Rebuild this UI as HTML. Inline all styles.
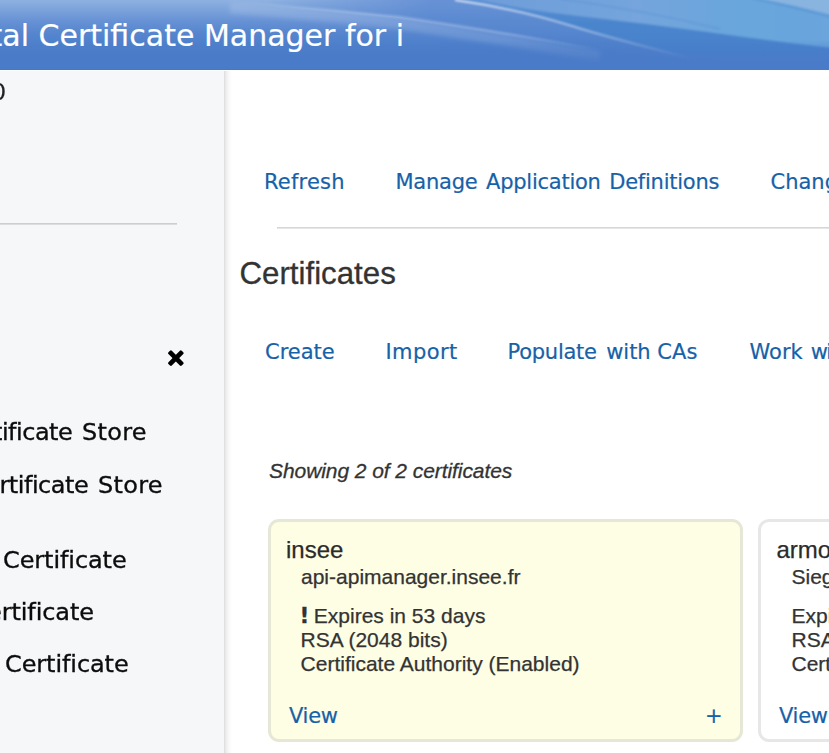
<!DOCTYPE html>
<html lang="en">
<head>
<meta charset="utf-8">
<title>Digital Certificate Manager for i</title>
<style>
html,body{margin:0;padding:0;}
body{width:829px;height:753px;overflow:hidden;position:relative;background:#fff;
  font-family:"DejaVu Sans","Liberation Sans",sans-serif;color:#161616;}
.abs{position:absolute;white-space:nowrap;line-height:1;}
#hdr{position:absolute;left:0;top:0;width:829px;height:70px;overflow:hidden;
  background:linear-gradient(to bottom,#8eb1e1 0px,#7ba2db 10px,#6590d4 22px,#5585ce 34px,#4c7eca 46px,#4a7bc8 56px,#4a7bc8 69px,#4473bd 70px);}
#hdr svg{position:absolute;left:0;top:0;}
#title{left:-9.5px;top:21px;font-size:30px;color:#fff;-webkit-text-stroke:0.2px #fff;}
#side{position:absolute;left:0;top:70px;width:224px;height:683px;background:linear-gradient(to bottom,#fcfdfe 0,#fcfdfe 1px,#f5f7f9 1.5px,#f5f7f9 100%);}
#sideshadow{position:absolute;left:224px;top:71px;width:8px;height:683px;
  background:linear-gradient(to right,rgba(0,0,0,0.14) 0,rgba(0,0,0,0.07) 2px,rgba(0,0,0,0.025) 5px,rgba(0,0,0,0) 8px);}
.item{font-size:24px;color:#0c0c0c;transform:scaleY(0.94);transform-origin:0 20px;-webkit-text-stroke:0.35px #0c0c0c;}
#sideline{position:absolute;left:0;top:223px;width:177px;height:2px;background:linear-gradient(to bottom,#cdcecf 0,#cdcecf 1px,#dcddde 1px,#dcddde 2px);}
.lnk{font-size:21px;color:#1761a8;-webkit-text-stroke:0.2px #1761a8;}
#hr{position:absolute;left:277px;top:227px;width:552px;height:2px;background:linear-gradient(to bottom,#d6d6d6 0,#d6d6d6 1px,#e6e6e6 1px,#e6e6e6 2px);}
.arial{font-family:"Liberation Sans",sans-serif;-webkit-text-stroke:0.3px currentColor;}
#h1{left:239.5px;top:258px;font-size:31.25px;color:#333;}
#showing{left:269px;letter-spacing:-0.07px;top:460px;font-size:21px;font-style:italic;color:#333;}
.card{position:absolute;box-sizing:border-box;border:3px solid #e6e7d6;border-radius:11px;background:#fefee5;}
.t{font-family:"Liberation Sans",sans-serif;color:#333;font-size:21px;-webkit-text-stroke:0.25px currentColor;}
.ct{font-family:"Liberation Sans",sans-serif;color:#2b2b2b;font-size:24px;-webkit-text-stroke:0.25px currentColor;}
</style>
</head>
<body>
<div id="hdr">
  <svg width="829" height="70" viewBox="0 0 829 70">
    <defs>
      <linearGradient id="gL" x1="480" y1="0" x2="829" y2="0" gradientUnits="userSpaceOnUse">
        <stop offset="0" stop-color="#6f9dd9"/>
        <stop offset="0.45" stop-color="#74a5dc"/>
        <stop offset="0.8" stop-color="#67a6dc"/>
        <stop offset="1" stop-color="#6aa5dc"/>
      </linearGradient>
      <linearGradient id="gD" x1="0" y1="0" x2="0" y2="70" gradientUnits="userSpaceOnUse">
        <stop offset="0" stop-color="#5a8fd3"/>
        <stop offset="0.35" stop-color="#4a85cd"/>
        <stop offset="0.7" stop-color="#4781cb"/>
        <stop offset="1" stop-color="#4a7bc8"/>
      </linearGradient>
      <linearGradient id="gS1" x1="455" y1="0" x2="690" y2="0" gradientUnits="userSpaceOnUse">
        <stop offset="0" stop-color="#fff" stop-opacity="0.75"/>
        <stop offset="0.5" stop-color="#fff" stop-opacity="0.45"/>
        <stop offset="1" stop-color="#fff" stop-opacity="0"/>
      </linearGradient>
      <linearGradient id="gS2" x1="230" y1="0" x2="600" y2="0" gradientUnits="userSpaceOnUse">
        <stop offset="0" stop-color="#fff" stop-opacity="0"/>
        <stop offset="0.3" stop-color="#fff" stop-opacity="0.25"/>
        <stop offset="0.75" stop-color="#fff" stop-opacity="0.3"/>
        <stop offset="1" stop-color="#fff" stop-opacity="0"/>
      </linearGradient>
      <linearGradient id="gFade" x1="0" y1="40" x2="0" y2="66" gradientUnits="userSpaceOnUse">
        <stop offset="0" stop-color="#4a7bc8" stop-opacity="0"/>
        <stop offset="1" stop-color="#4a7bc8" stop-opacity="1"/>
      </linearGradient>
      <linearGradient id="gW" x1="0" y1="0" x2="0" y2="70" gradientUnits="userSpaceOnUse">
        <stop offset="0" stop-color="#6892d5"/>
        <stop offset="0.2" stop-color="#5f8cd2"/>
        <stop offset="0.45" stop-color="#5686ce"/>
        <stop offset="0.7" stop-color="#4c7eca"/>
        <stop offset="1" stop-color="#4a7bc8"/>
      </linearGradient>
      <linearGradient id="gWm" x1="270" y1="0" x2="430" y2="0" gradientUnits="userSpaceOnUse">
        <stop offset="0" stop-color="#fff" stop-opacity="0"/>
        <stop offset="1" stop-color="#fff" stop-opacity="1"/>
      </linearGradient>
      <mask id="mW" maskUnits="userSpaceOnUse" x="0" y="0" width="829" height="70">
        <path d="M250 -4 L250 3 C300 7 350 12 400 17 C453 25 506 33 600 50 L700 62 L700 -4 Z" fill="url(#gWm)"/>
      </mask>
      <filter id="b1" x="-5%" y="-50%" width="110%" height="200%"><feGaussianBlur stdDeviation="0.8"/></filter>
      <filter id="b2" x="-5%" y="-50%" width="110%" height="200%"><feGaussianBlur stdDeviation="2"/></filter>
      <filter id="b3" x="-5%" y="-50%" width="110%" height="200%"><feGaussianBlur stdDeviation="1.2"/></filter>
    </defs>
    <!-- wedge above streak 2 -->
    <rect x="250" y="0" width="460" height="70" fill="url(#gW)" mask="url(#mW)"/>
    <!-- haze below streak 2 -->
    <path d="M230 8 C300 14 350 19 400 24 C453 32 506 40 600 57" stroke="#fff" stroke-opacity="0.13" stroke-width="11" fill="none" filter="url(#b2)"/>
    <!-- dark wedge -->
    <path d="M450 -2 C490 4 530 13 572 26 C610 38 650 48 700 60 L829 72 L829 -2 Z" fill="url(#gD)" filter="url(#b3)"/>
    <!-- light upper-right region -->
    <path d="M470 -3 C500 6 545 12 609 19.5 C680 28 740 37 832 48 L832 -3 Z" fill="url(#gL)" filter="url(#b1)"/>
    <!-- thin darker line inside light region -->
    <path d="M560 -1 C610 6 660 14 720 29" stroke="#5a8fd2" stroke-opacity="0.5" stroke-width="1.5" fill="none" filter="url(#b1)"/>
    <!-- pale band top-right -->
    <path d="M752 -2 C780 4 805 10 832 17" stroke="#4f86cc" stroke-opacity="0.45" stroke-width="2" fill="none" filter="url(#b1)"/>
    <path d="M752 -3 C780 2 805 8 832 15 L832 -3 Z" fill="#94b8e2" fill-opacity="0.75" filter="url(#b1)"/>
    <!-- fade wedge bottom into base colour -->
    <rect x="440" y="40" width="389" height="30" fill="url(#gFade)"/>
    <!-- streak 2 -->
    <path d="M230 1.5 C300 7 350 12 400 17 C453 25 506 33 600 50" stroke="url(#gS2)" stroke-width="2" fill="none" filter="url(#b1)"/>
    <!-- streak 1 -->
    <path d="M455 0 C490 5 530 13 572 26 C610 38 650 48 690 58" stroke="url(#gS1)" stroke-width="2" fill="none" filter="url(#b1)"/>
  </svg>
  <div class="abs" id="title">tal Certificate Manager for i</div>
</div>

<div id="side"></div>
<div id="sideshadow"></div>
<div class="abs item" style="left:-9px;top:80px;color:#222;-webkit-text-stroke:0.1px #222;">0</div>
<div id="sideline"></div>
<svg style="position:absolute;left:160px;top:342px;" width="32" height="32" viewBox="160 342 32 32">
  <g fill="#000" transform="translate(175.85 358.1)">
    <rect x="-9.4" y="-2.4" width="18.8" height="4.8" rx="1.3" transform="rotate(45)"/>
    <rect x="-9.4" y="-2.4" width="18.8" height="4.8" rx="1.3" transform="rotate(-45)"/>
  </g>
</svg>
<div class="abs item" style="left:-7px;top:420px;letter-spacing:-0.5px;">tificate</div>
<div class="abs item" style="left:82px;top:420px;letter-spacing:0.3px;">Store</div>
<div class="abs item" style="left:-0.5px;top:473px;letter-spacing:-0.5px;">rtificate</div>
<div class="abs item" style="left:98px;top:473px;letter-spacing:0.3px;">Store</div>
<div class="abs item" style="left:3px;top:548px;letter-spacing:-0.1px;">Certificate</div>
<div class="abs item" style="left:-13px;top:600px;letter-spacing:-0.1px;">ertificate</div>
<div class="abs item" style="left:5px;top:652px;letter-spacing:-0.1px;">Certificate</div>

<div class="abs lnk" style="left:264px;top:172px;letter-spacing:0.2px;">Refresh</div>
<div class="abs lnk" style="left:395.5px;top:172px;letter-spacing:-0.25px;word-spacing:2.2px;">Manage Application Definitions</div>
<div class="abs lnk" style="left:770.5px;top:172px;">Change Password</div>
<div id="hr"></div>
<div class="abs arial" id="h1">Certificates</div>
<div class="abs lnk" style="left:265px;top:342px;">Create</div>
<div class="abs lnk" style="left:385.5px;top:342px;letter-spacing:0.4px;">Import</div>
<div class="abs lnk" style="left:507.5px;top:342px;"><span style="letter-spacing:-0.25px;">Populate</span><span style="margin-left:2.7px"> with CAs</span></div>
<div class="abs lnk" style="left:749.5px;top:342px;word-spacing:1.3px;">Work w<span style="margin-left:-1.6px">i</span>th CRL Locations</div>
<div class="abs arial" id="showing">Showing 2 of 2 certificates</div>

<div class="card" style="left:268px;top:519px;width:475px;height:223px;"></div>
<div class="abs ct" style="left:286px;top:538px;">insee</div>
<div class="abs t" style="left:301px;top:566px;">api-apimanager.insee.fr</div>
<div class="abs" style="left:299.5px;top:605px;font-size:21.5px;font-weight:bold;color:#333;-webkit-text-stroke:0.3px #333;">!</div>
<div class="abs t" style="left:313.8px;top:605px;">Expires in 53 days</div>
<div class="abs t" style="left:300.6px;top:629px;">RSA (2048 bits)</div>
<div class="abs t" style="left:300.6px;top:653px;">Certificate Authority (Enabled)</div>
<div class="abs lnk" style="left:289px;top:706px;letter-spacing:-0.3px;">View</div>
<div class="abs lnk" style="left:705px;top:706px;">+</div>

<div class="card" style="left:758px;top:519px;width:475px;height:223px;background:#fff;border-color:#e7e7e7;"></div>
<div class="abs ct" style="left:776.5px;top:538px;">armor</div>
<div class="abs t" style="left:791.5px;top:566px;">Siege</div>
<div class="abs t" style="left:791.5px;top:605px;">Expires in 300 days</div>
<div class="abs t" style="left:791.5px;top:629px;">RSA (2048 bits)</div>
<div class="abs t" style="left:791.5px;top:653px;">Certificate Authority</div>
<div class="abs lnk" style="left:779px;top:706px;letter-spacing:-0.3px;">View</div>
</body>
</html>
